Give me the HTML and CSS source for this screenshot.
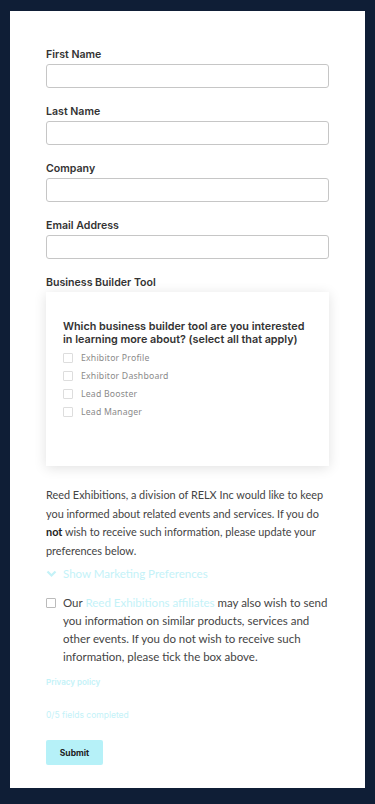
FILE: index.html
```html
<!DOCTYPE html>
<html lang="en">

<head>
    <meta charset="UTF-8">
    <meta name="viewport" content="width=device-width, initial-scale=1.0">
    <title>Business Builder Form</title>
    <link rel="stylesheet" href="styles.css">
</head>

<body>
    <form class="card">
        <div class="field">
            <label class="label">First Name</label>
            <input class="input" type="text">
        </div>
        <div class="field">
            <label class="label">Last Name</label>
            <input class="input" type="text">
        </div>
        <div class="field">
            <label class="label">Company</label>
            <input class="input" type="text">
        </div>
        <div class="field">
            <label class="label">Email Address</label>
            <input class="input" type="email">
        </div>
        <div class="field">
            <label class="label">Business Builder Tool</label>
            <div class="tool-box">
                <div class="question">Which business builder tool are you interested in learning more about? (select all that apply)</div>
                <div class="option"><span class="box"></span>Exhibitor Profile</div>
                <div class="option"><span class="box"></span>Exhibitor Dashboard</div>
                <div class="option"><span class="box"></span>Lead Booster</div>
                <div class="option"><span class="box"></span>Lead Manager</div>
            </div>
        </div>

        <p class="notice">Reed Exhibitions, a division of RELX Inc would like to keep you informed about related events and services. If you do <b>not</b> wish to receive such information, please update your preferences below.</p>

        <div class="toggle">
            <svg width="11" height="8" viewBox="0 0 11 8"><path d="M1.5 1.5 L5.5 5.5 L9.5 1.5" fill="none" stroke="#c4f2f8" stroke-width="2.2"/></svg>
            <span>Show Marketing Preferences</span>
        </div>

        <div class="consent">
            <span class="box"></span>
            <p>Our <a>Reed Exhibitions affiliates</a> may also wish to send you information on similar products, services and other events. If you do not wish to receive such information, please tick the box above.</p>
        </div>

        <a class="privacy">Privacy policy</a>
        <div class="progress">0/5 fields completed</div>
        <button class="submit" type="button">Submit</button>
    </form>
</body>

</html>
```

FILE: styles.css
```css
body {
    margin: 0;
    padding: 11px 10px 15px;
    background-color: #0f1e36;
    font-family: Inter, "Liberation Sans", sans-serif;
}

.card {
    display: flex;
    flex-direction: column;
    align-items: flex-start;
    background-color: #fff;
    padding: 37px 36px 23px;
}

.field {
    display: flex;
    flex-direction: column;
    width: 100%;
    margin-bottom: 17px;
}

.label {
    font-size: 10.6px;
    font-weight: 600;
    line-height: 13px;
    color: #333;
    margin-bottom: 3px;
}

.input {
    box-sizing: border-box;
    height: 24px;
    width: 100%;
    margin: 0;
    border: 1px solid #c6c6c6;
    border-radius: 3px;
    background: #fff;
}

.tool-box {
    padding: 28px 20px 45px 17px;
    background: #fff;
    box-shadow: 0 2px 12px rgba(0, 0, 0, 0.12);
    margin-bottom: 3px;
}

.question {
    font-size: 10.8px;
    font-weight: 600;
    line-height: 13px;
    color: #333;
    margin-bottom: 3px;
}

.option {
    display: flex;
    align-items: center;
    height: 18px;
    font-family: "Noto Sans", sans-serif;
    font-size: 8.7px;
    color: #8a8a8a;
    letter-spacing: 0.2px;
}

.box {
    display: inline-block;
    box-sizing: border-box;
    width: 10px;
    height: 10px;
    border: 1px solid #ddd;
    border-radius: 1px;
    margin-right: 8px;
    flex: none;
}

.notice {
    margin: 0;
    font-family: Lato, sans-serif;
    font-size: 10.9px;
    line-height: 18.5px;
    color: #444;
}

.notice b {
    color: #222;
}

.toggle {
    display: flex;
    align-items: center;
    gap: 6px;
    margin-top: 7px;
    font-family: Lato, sans-serif;
    font-size: 11.5px;
    color: #c4f2f8;
}

.consent {
    display: flex;
    align-items: flex-start;
    margin-top: 14px;
}

.consent .box {
    margin-top: 4px;
    margin-right: 7px;
    border-color: #bbb;
}

.consent p {
    margin: 0;
    font-family: Lato, sans-serif;
    font-size: 11.5px;
    line-height: 18px;
    color: #444;
}

.consent a {
    color: #c4f2f8;
}

.privacy {
    margin-top: 11px;
    font-size: 8px;
    font-weight: 600;
    color: #c4f2f8;
}

.progress {
    margin-top: 23px;
    font-size: 8.5px;
    color: #c4f2f8;
}

.submit {
    margin-top: 20px;
    width: 57px;
    height: 25px;
    border: none;
    border-radius: 2px;
    background-color: #b6f1f8;
    font-family: Inter, sans-serif;
    font-size: 8.5px;
    font-weight: 700;
    color: #222;
}
```
